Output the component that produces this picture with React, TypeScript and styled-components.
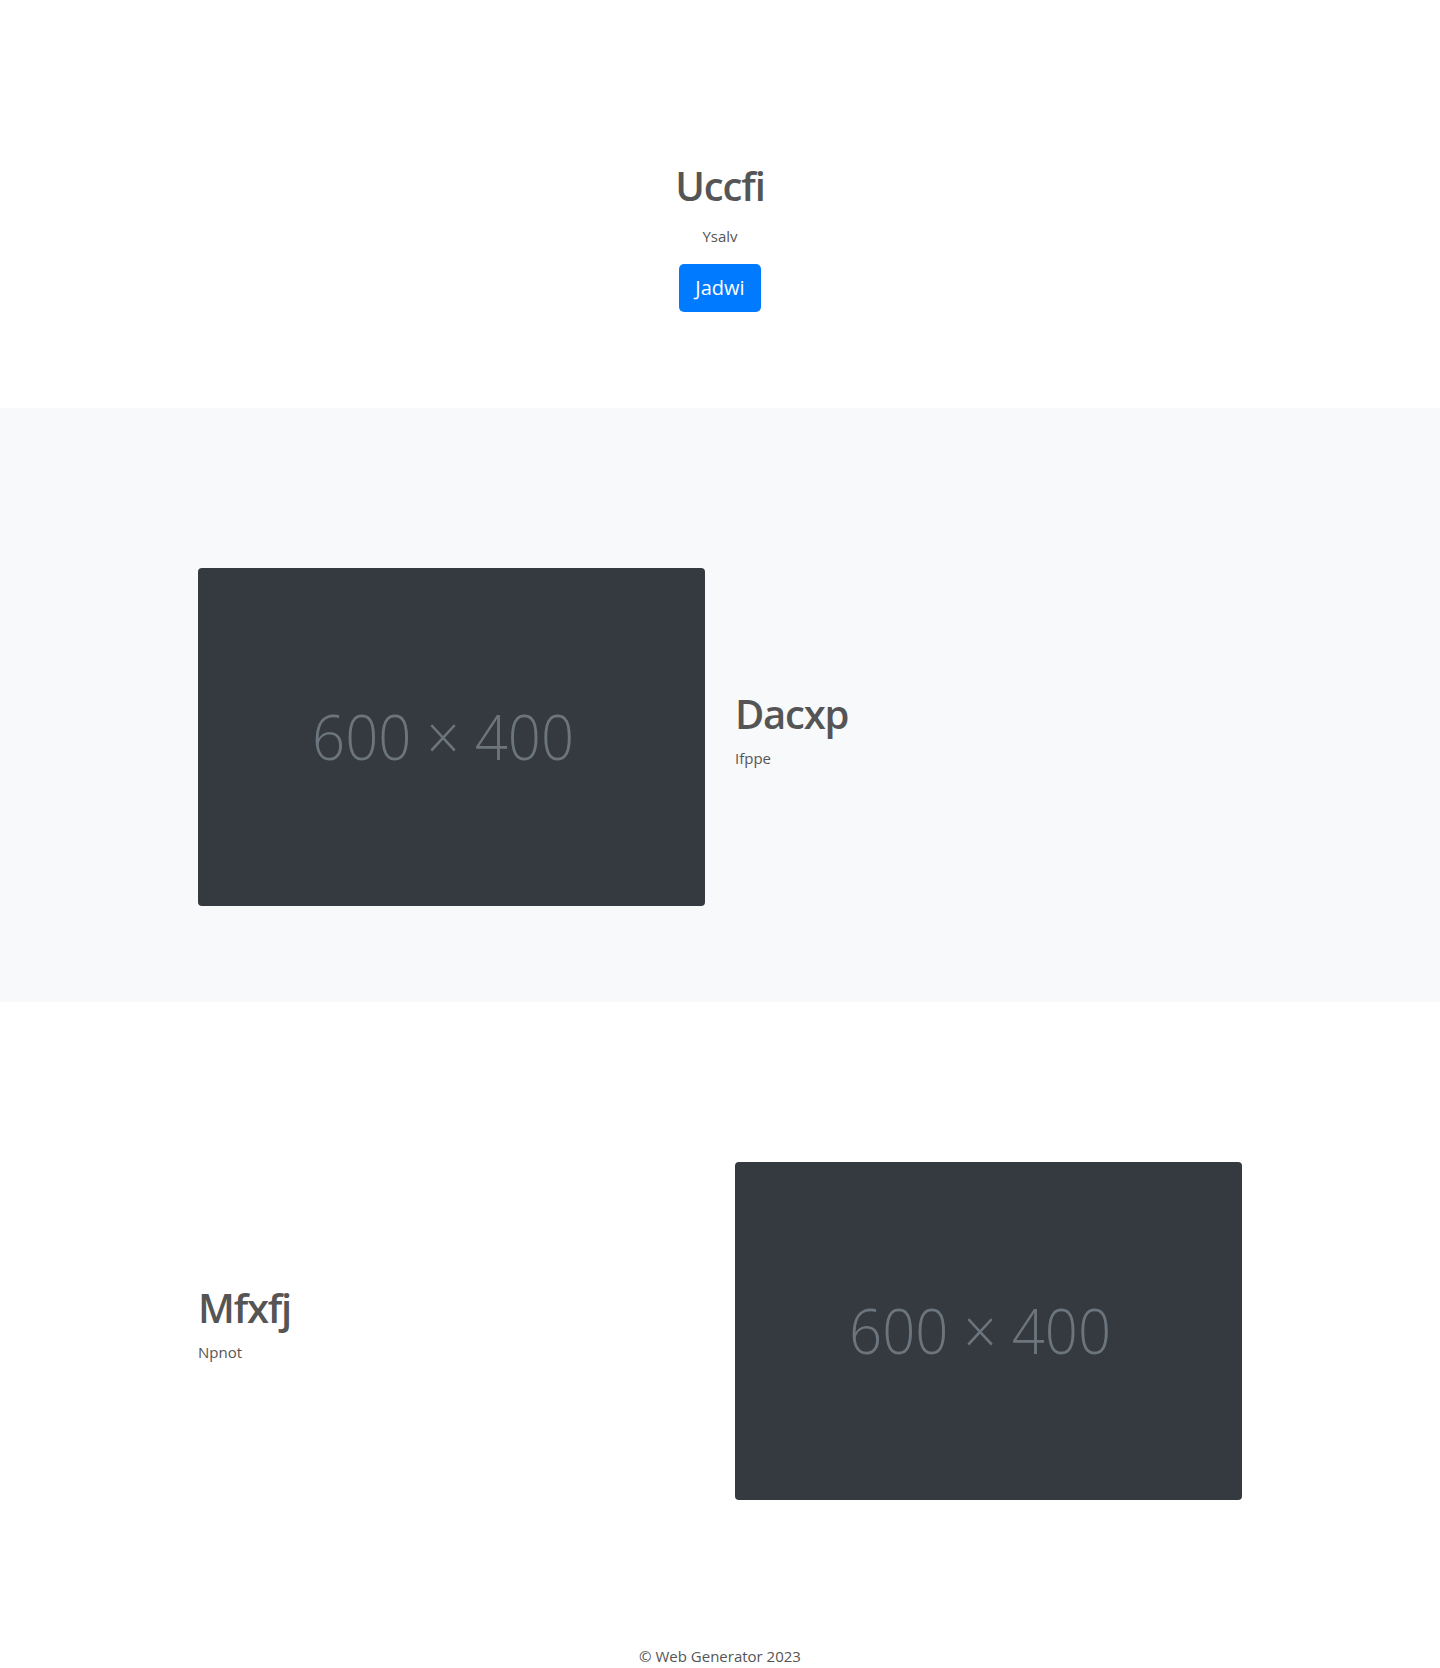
import styled, { createGlobalStyle } from 'styled-components';

const GlobalStyle = createGlobalStyle`
  * {
    box-sizing: border-box;
  }

  body {
    margin: 0;
    font-family: 'Segoe UI', 'Open Sans', 'Noto Sans', sans-serif;
    font-size: 16px;
    line-height: 1.5;
    color: #555;
    background: #fff;
  }
`;

type Feature = {
  title: string;
  text: string;
  reverse: boolean;
  tone: 'light' | 'white';
};

const features: Feature[] = [
  { title: 'Dacxp', text: 'Ifppe', reverse: false, tone: 'light' },
  { title: 'Mfxfj', text: 'Npnot', reverse: true, tone: 'white' },
];

const Placeholder = () => (
  <ImageBox>
    <svg viewBox="0 0 600 400" width="100%" height="100%" preserveAspectRatio="none">
      <text
        x="290"
        y="227"
        textAnchor="middle"
        textLength="310"
        lengthAdjust="spacingAndGlyphs"
        fontFamily="'Open Sans', 'Noto Sans', sans-serif"
        fontWeight="300"
        fontSize="74"
        fill="#6c757d"
      >
        600 × 400
      </text>
    </svg>
  </ImageBox>
);

const App = () => {
  return (
    <>
      <GlobalStyle />
      <Hero>
        <HeroTitle>Uccfi</HeroTitle>
        <HeroText>Ysalv</HeroText>
        <Button>Jadwi</Button>
      </Hero>

      {features.map((f) => (
        <Section key={f.title} tone={f.tone}>
          <Row>
            {f.reverse ? (
              <>
                <TextCol>
                  <Heading>{f.title}</Heading>
                  <Text>{f.text}</Text>
                </TextCol>
                <Placeholder />
              </>
            ) : (
              <>
                <Placeholder />
                <TextCol>
                  <Heading>{f.title}</Heading>
                  <Text>{f.text}</Text>
                </TextCol>
              </>
            )}
          </Row>
        </Section>
      ))}

      <Footer>© Web Generator 2023</Footer>
    </>
  );
};

const Hero = styled.header`
  display: flex;
  flex-direction: column;
  align-items: center;
  text-align: center;
  padding: 162px 0 96px;
`;

const HeroTitle = styled.h1`
  margin: 0 0 14px;
  font-size: 40px;
  font-weight: 600;
  line-height: 1.2;
  letter-spacing: -1.1px;
  color: #555;
`;

const HeroText = styled.p`
  margin: 0 0 16px;
  font-size: 15px;
  line-height: 24px;
  color: #555;
`;

const Button = styled.button`
  height: 48px;
  padding: 0 16px;
  border: none;
  border-radius: 5px;
  background: #007bff;
  color: #fff;
  font-family: inherit;
  font-size: 20px;
  line-height: 48px;
  cursor: pointer;
`;

const Section = styled.section<{ tone: 'light' | 'white' }>`
  background: ${({ tone }) => (tone === 'light' ? '#f8f9fa' : '#fff')};
  padding: 160px 0 96px;
`;

const Row = styled.div`
  width: 1044px;
  margin: 0 auto;
  display: grid;
  grid-template-columns: 507px 507px;
  column-gap: 30px;
  align-items: center;
`;

const ImageBox = styled.div`
  width: 507px;
  height: 338px;
  background: #343a40;
  border-radius: 4px;
  overflow: hidden;

  svg {
    display: block;
  }
`;

const TextCol = styled.div`
  display: flex;
  flex-direction: column;
  padding-top: 2px;
`;

const Heading = styled.h2`
  margin: 0 0 8px;
  font-size: 40px;
  font-weight: 600;
  line-height: 1.2;
  letter-spacing: -1.2px;
  color: #555;
`;

const Text = styled.p`
  margin: 0 0 16px;
  font-size: 15px;
  line-height: 24px;
  color: #555;
`;

const Footer = styled.footer`
  padding: 48px 0 24px;
  text-align: center;
  font-size: 15px;
  line-height: 24px;
  color: #555;
`;

export default App;
